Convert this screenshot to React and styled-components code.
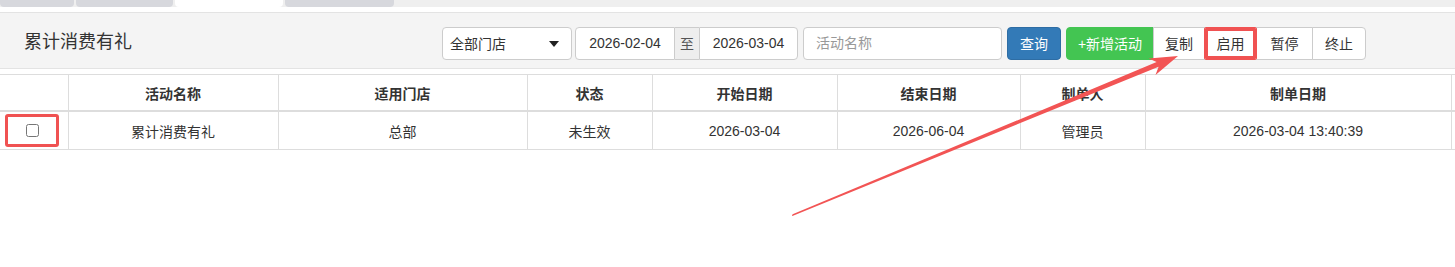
import styled, { createGlobalStyle } from "styled-components";

const GlobalStyle = createGlobalStyle`
  html, body {
    margin: 0;
    padding: 0;
    background: #fff;
    overflow: hidden;
  }
  body {
    font-family: "Liberation Sans", Arial, "Noto Sans CJK SC", sans-serif;
    font-size: 14px;
    color: #333;
  }
`;

const columns = [
  { key: "check", title: "", width: 68 },
  { key: "name", title: "活动名称", width: 210 },
  { key: "store", title: "适用门店", width: 249 },
  { key: "status", title: "状态", width: 125 },
  { key: "start", title: "开始日期", width: 185 },
  { key: "end", title: "结束日期", width: 183 },
  { key: "maker", title: "制单人", width: 125 },
  { key: "created", title: "制单日期", width: 306 },
  { key: "extra", title: "", width: 200 },
];

const rows = [
  {
    name: "累计消费有礼",
    store: "总部",
    status: "未生效",
    start: "2026-03-04",
    end: "2026-06-04",
    maker: "管理员",
    created: "2026-03-04 13:40:39",
    extra: "",
  },
];

const App = () => {
  return (
    <Page>
      <GlobalStyle />

      <TabStrip>
        <Tab $w={74} />
        <Tab $w={97} />
        <Tab $w={108} $active />
        <Tab $w={109} />
      </TabStrip>

      <Header>
        <Title>累计消费有礼</Title>
        <Controls>
          <Select>
            全部门店
            <Caret />
          </Select>
          <DateGroup>
            <DateInput>2026-02-04</DateInput>
            <Addon>至</Addon>
            <DateInput $last>2026-03-04</DateInput>
          </DateGroup>
          <TextInput placeholder="活动名称" />
          <Button $variant="primary">查询</Button>
          <BtnGroup>
            <GroupButton $variant="success" $first>+新增活动</GroupButton>
            <GroupButton $w={52}>复制</GroupButton>
            <GroupButton $w={53} $marked>启用</GroupButton>
            <GroupButton $w={57}>暂停</GroupButton>
            <GroupButton $w={54} $last>终止</GroupButton>
          </BtnGroup>
        </Controls>
      </Header>

      <TableWrap>
        <Table>
          <colgroup>
            {columns.map((c) => (
              <col key={c.key} style={{ width: c.width }} />
            ))}
          </colgroup>
          <thead>
            <tr>
              {columns.map((c) => (
                <Th key={c.key}>{c.title}</Th>
              ))}
            </tr>
          </thead>
          <tbody>
            {rows.map((r, i) => (
              <tr key={i}>
                <Td>
                  <CheckMark>
                    <input type="checkbox" />
                  </CheckMark>
                </Td>
                {columns.slice(1).map((c) => (
                  <Td key={c.key}>{r[c.key]}</Td>
                ))}
              </tr>
            ))}
          </tbody>
        </Table>
      </TableWrap>

      {/* flecha de anotación */}
      <Arrow viewBox="0 0 1455 267">
        <polygon
          points="792,215.5 792.6,214.3 1156.6,62.1 1148.7,58.4 1178,56 1155.5,75 1158.6,66.7 792.4,216"
          fill="#f25454"
        />
      </Arrow>
    </Page>
  );
};

export default App;

const Page = styled.div`
  position: relative;
  width: 1455px;
  height: 267px;
  overflow: hidden;
`;

const TabStrip = styled.div`
  display: flex;
  gap: 2px;
  height: 7px;
  background: #efefef;
  margin-bottom: 5px;
`;

const Tab = styled.div`
  width: ${(p) => p.$w}px;
  background: ${(p) => (p.$active ? "#fff" : "#d7d8dd")};
  border-radius: 0 0 4px 4px;
`;

const Header = styled.div`
  display: flex;
  align-items: center;
  height: 55px;
  padding-left: 24px;
  background: #f4f4f4;
  border-top: 1px solid #e3e3e3;
  border-bottom: 1px solid #e3e3e3;
  margin-bottom: 5px;
`;

const Title = styled.div`
  width: 418px;
  font-size: 18px;
  color: #333;
  margin-top: -2px;
`;

const Controls = styled.div`
  display: flex;
  align-items: center;
  margin-top: 5px;
`;

const Select = styled.div`
  position: relative;
  box-sizing: border-box;
  width: 130px;
  height: 33px;
  padding-left: 7px;
  display: flex;
  align-items: center;
  background: #fff;
  border: 1px solid #ccc;
  border-radius: 4px;
  margin-right: 3px;
`;

const Caret = styled.span`
  position: absolute;
  right: 12px;
  top: 13px;
  border-left: 5px solid transparent;
  border-right: 5px solid transparent;
  border-top: 6px solid #222;
`;

const DateGroup = styled.div`
  display: flex;
  height: 33px;
  margin-right: 5px;
`;

const DateInput = styled.div`
  box-sizing: border-box;
  width: ${(p) => (p.$last ? 99 : 100)}px;
  display: flex;
  align-items: center;
  justify-content: center;
  background: #fff;
  border: 1px solid #ccc;
  border-radius: ${(p) => (p.$last ? "0 4px 4px 0" : "4px 0 0 4px")};
`;

const Addon = styled.div`
  box-sizing: border-box;
  width: 24px;
  display: flex;
  align-items: center;
  justify-content: center;
  background: #eee;
  border-top: 1px solid #ccc;
  border-bottom: 1px solid #ccc;
  color: #555;
`;

const TextInput = styled.input`
  box-sizing: border-box;
  width: 199px;
  height: 33px;
  padding: 0 12px;
  border: 1px solid #ccc;
  border-radius: 4px;
  font: inherit;
  margin-right: 5px;
  outline: none;

  &::placeholder {
    color: #999;
  }
`;

const variants = {
  primary: { bg: "#337ab7", border: "#2e6da4", color: "#fff" },
  success: { bg: "#43c552", border: "#43c552", color: "#fff" },
  default: { bg: "#fff", border: "#ccc", color: "#333" },
};

const Button = styled.button`
  box-sizing: border-box;
  height: 33px;
  padding: 0 12px;
  font: inherit;
  background: ${(p) => variants[p.$variant || "default"].bg};
  border: 1px solid ${(p) => variants[p.$variant || "default"].border};
  color: ${(p) => variants[p.$variant || "default"].color};
  border-radius: 4px;
  margin-right: 5px;
  cursor: pointer;
`;

const BtnGroup = styled.div`
  display: flex;
`;

const GroupButton = styled(Button)`
  margin-right: 0;
  padding: 0;
  width: ${(p) => (p.$w ? `${p.$w}px` : "88px")};
  margin-left: ${(p) => (p.$first ? 0 : "-1px")};
  border-radius: ${(p) =>
    p.$first ? "4px 0 0 4px" : p.$last ? "0 4px 4px 0" : "0"};
  ${(p) =>
    p.$marked &&
    `
    position: relative;
    z-index: 1;
    box-shadow: inset 0 0 0 3px #f05252;
    border-color: #f05252;
    border-radius: 2px;
  `}
`;

const TableWrap = styled.div`
  overflow: hidden;
`;

const Table = styled.table`
  table-layout: fixed;
  width: 1651px;
  border-collapse: collapse;
  border-top: 1px solid #ddd;
`;

const Th = styled.th`
  height: 35px;
  padding: 0 8px;
  font-weight: bold;
  text-align: center;
  border-left: 1px solid #ddd;
  border-bottom: 2px solid #ddd;

  &:first-child {
    border-left: none;
  }
`;

const Td = styled.td`
  height: 37px;
  padding: 0 8px;
  text-align: center;
  border-left: 1px solid #ddd;
  border-bottom: 1px solid #ddd;

  &:first-child {
    border-left: none;
  }
`;

// recuadro rojo de anotación alrededor del checkbox
const CheckMark = styled.span`
  box-sizing: border-box;
  display: flex;
  align-items: center;
  justify-content: center;
  width: 54px;
  height: 33px;
  margin-left: -3px;
  border: 3px solid #f05252;
  border-radius: 3px;

  input {
    margin: 0;
    width: 13px;
    height: 13px;
  }
`;

const Arrow = styled.svg`
  position: absolute;
  left: 0;
  top: 0;
  width: 1455px;
  height: 267px;
  pointer-events: none;
`;
